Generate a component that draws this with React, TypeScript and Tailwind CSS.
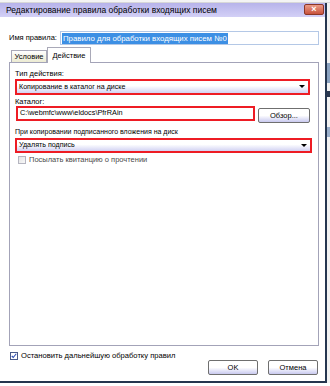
import React from 'react';

const font = { fontFamily: '"Liberation Sans", Arial, sans-serif' };

function Combo({ text, width, height }: { text: string; width: string; height: string }) {
  return (
    <div className={`${width} ${height} border-2 border-[#ee1c24]`}>
      <div className="relative flex h-full items-center bg-gradient-to-b from-white from-40% to-[#d2d2f2] pl-[2px] text-[7.1px] text-black">
        {text}
        <span className="absolute right-[3px] top-[4px] h-0 w-0 border-x-[3px] border-t-[3px] border-x-transparent border-t-black" />
      </div>
    </div>
  );
}

function Btn({ label, width }: { label: string; width: string }) {
  return (
    <div className={`${width} flex h-[15px] items-center justify-center rounded-[2px] border border-[#6f6f6f] bg-gradient-to-b from-white from-50% to-[#c9c9ef] text-[7.5px] text-black`}>
      {label}
    </div>
  );
}

export default function App() {
  return (
    <div className="relative h-[386px] w-[330px] overflow-hidden bg-white" style={font}>
      <div className="h-[3px] border-b border-[#d8d8d8] bg-[#f4f4f4]" />
      <div className="flex">
        {/* dialog window */}
        <div className="flex h-[380px] w-[327px] flex-col border-b-2 border-r-2 border-[#25364f] bg-white">
          {/* title bar */}
          <div className="relative flex h-[14px] items-center bg-gradient-to-b from-[#b7b3ea] to-[#d3d0f6] pl-[6px] text-[8.5px] text-black">
            Редактирование правила обработки входящих писем
            <div className="absolute right-[1px] top-[1px] flex h-[11px] w-[20px] items-center justify-center rounded-[2px] border border-[#8b3626] bg-gradient-to-b from-[#eb9a86] to-[#c8523d] text-[9px] font-bold leading-none text-white">
              ×
            </div>
          </div>

          {/* rule name */}
          <div className="mt-[14px] flex items-center">
            <span className="w-[60px] whitespace-nowrap pl-[9px] text-[7.5px] text-black">Имя правила:</span>
            <div className="flex h-[14px] w-[259px] items-center border border-[#b4c8e6] bg-white pl-[1px]">
              <span className="whitespace-nowrap bg-[#3c8fe4] px-[1px] text-[7.8px] leading-[11px] text-white">Правило для обработки входящих писем №0</span>
            </div>
          </div>

          {/* tabs */}
          <div className="relative z-10 -mb-px mt-[2px] flex items-end pl-[11px]">
            <div className="mb-px flex h-[12px] w-[36px] items-center justify-center border border-b-0 border-[#a9a9b8] bg-gradient-to-b from-white to-[#ecebd2] text-[7.5px] text-black">
              Условие
            </div>
            <div className="flex h-[16px] w-[44px] items-center justify-center border border-b-0 border-[#a9a9b8] bg-white text-[7.5px] text-black">
              Действие
            </div>
          </div>

          {/* tab panel */}
          <div className="ml-[9px] flex h-[284px] w-[310px] flex-col border border-[#a3a3b8] bg-white pl-[5px] text-[7.5px] text-black">
            <div className="mt-[6px] h-[10px] leading-[10px]">Тип действия:</div>
            <div>
              <Combo text="Копирование в каталог на диске" width="w-[295px]" height="h-[16px]" />
            </div>
            <div className="mt-[2px] h-[9px] leading-[9px]">Каталог:</div>
            <div className="flex items-start">
              <div className="ml-[1px] h-[15px] w-[239px] border-2 border-[#ee1c24]">
                <div className="flex h-full items-center bg-white pl-[2px] text-[7.3px]">C:\webmfc\www\eldocs\PfrRAin</div>
              </div>
              <div className="ml-[3px] mt-[2px]">
                <Btn label="Обзор..." width="w-[52px]" />
              </div>
            </div>
            <div className="mt-[4px] h-[10px] text-[7px] leading-[10px]">При копировании подписанного вложения на диск</div>
            <div className="mt-[1px]">
              <Combo text="Удалять подпись" width="w-[297px]" height="h-[15px]" />
            </div>
            <div className="mt-[2px] flex h-[10px] items-center pl-[3px] text-[#4a4a4a]">
              <span className="mr-[3px] h-[8px] w-[8px] border border-[#b5b5c0] bg-gradient-to-br from-[#e4e4e4] to-[#f8f8f8]" />
              Посылать квитанцию о прочтении
            </div>
          </div>

          {/* stop processing */}
          <div className="mt-[5px] flex h-[9px] items-center pl-[10px] text-[7.6px] text-black">
            <span className="mr-[3px] flex h-[8px] w-[8px] items-center justify-center border border-[#4a5a8a] bg-white">
              <svg viewBox="0 0 8 8" className="h-[6px] w-[6px]">
                <path d="M1 4 L3 6 L7 1" fill="none" stroke="#2b4cb4" strokeWidth="1.5" />
              </svg>
            </span>
            Остановить дальнейшую обработку правил
          </div>

          {/* buttons */}
          <div className="flex justify-end gap-[10px] pr-[7px]">
            <Btn label="OK" width="w-[50px]" />
            <Btn label="Отмена" width="w-[50px]" />
          </div>
        </div>

        {/* background behind dialog */}
        <div className="flex h-[380px] w-[3px] flex-col bg-[#f2f2f2]">
          <div className="mt-[60px] h-[20px] bg-[#8aa2c0]" />
          <div className="mt-[8px] h-[6px] bg-[#2a3850]" />
          <div className="mt-[30px] h-[10px] bg-[#9ab0cc]" />
        </div>
      </div>
    </div>
  );
}
